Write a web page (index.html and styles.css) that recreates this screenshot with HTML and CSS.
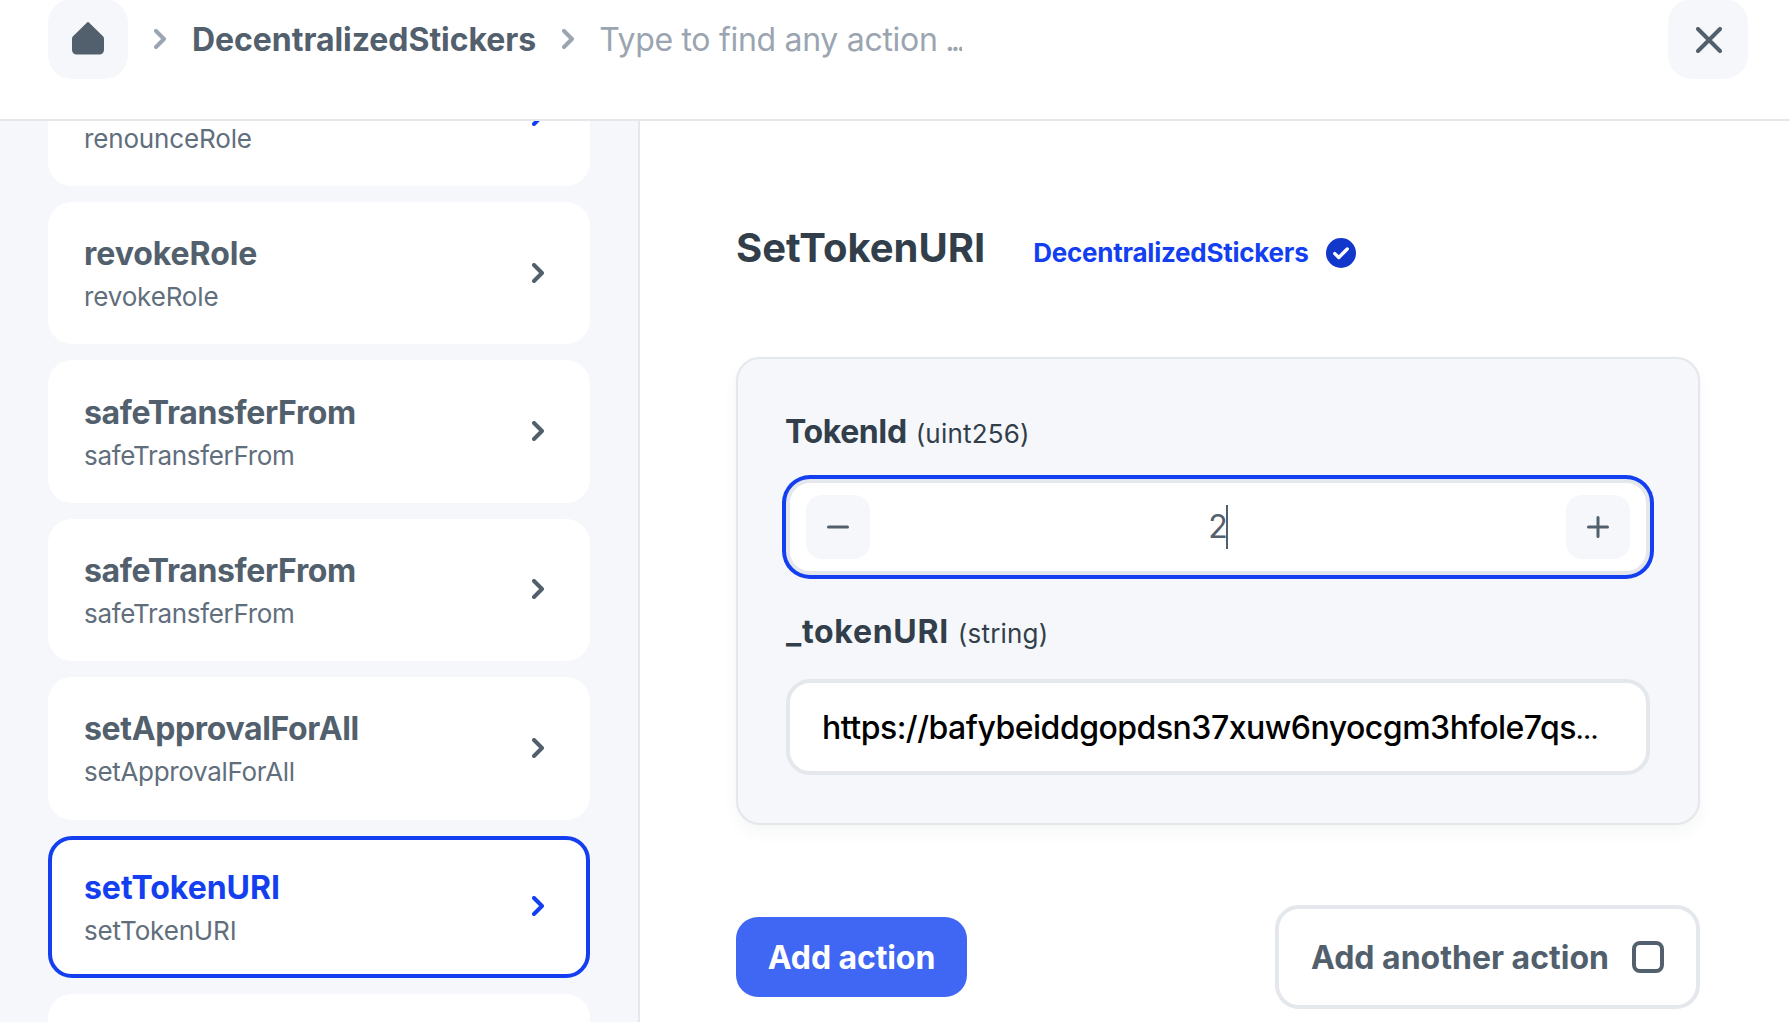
FILE: index.html
```html
<!DOCTYPE html>
<html lang="en">
<head>
<meta charset="utf-8">
<title>SetTokenURI</title>
<link rel="stylesheet" href="styles.css">
</head>
<body>
<svg class="defs" width="0" height="0" aria-hidden="true">
  <symbol id="chevron" viewBox="0 0 12 20"><path d="M2 2l8 8-8 8" fill="none" stroke="currentColor" stroke-width="4" stroke-linecap="round" stroke-linejoin="round"/></symbol>
</svg>
<header class="topbar">
  <button class="square-btn" aria-label="Home">
    <svg width="32" height="33" viewBox="0 0 32 33"><path d="M14.8.7a1.7 1.7 0 0 1 2.4 0L31 14.3a3.400 3.400 0 0 1 1 2.400V28a4.500 4.500 0 0 1-4.500 4.500h-23A4.500 4.500 0 0 1 0 28V16.700a3.400 3.400 0 0 1 1-2.400z" fill="currentColor"/></svg>
  </button>
  <svg class="crumb-chevron" width="12" height="20"><use href="#chevron"/></svg>
  <span class="crumb">DecentralizedStickers</span>
  <svg class="crumb-chevron" width="12" height="20"><use href="#chevron"/></svg>
  <span class="search">Type to find any action <span class="dots">...</span></span>
  <button class="square-btn close" aria-label="Close">
    <svg width="26" height="26" viewBox="0 0 26 26"><path d="M2 2l22 22M24 2L2 24" stroke="currentColor" stroke-width="4" stroke-linecap="round"/></svg>
  </button>
</header>
<div class="body">
  <nav class="sidebar">
    <div class="card active-arrow">
      <div><div class="card-title">renounceRole</div><div class="card-sub">renounceRole</div></div>
      <svg class="card-chevron" width="12" height="20"><use href="#chevron"/></svg>
    </div>
    <div class="card">
      <div><div class="card-title">revokeRole</div><div class="card-sub">revokeRole</div></div>
      <svg class="card-chevron" width="12" height="20"><use href="#chevron"/></svg>
    </div>
    <div class="card tight">
      <div><div class="card-title">safeTransferFrom</div><div class="card-sub">safeTransferFrom</div></div>
      <svg class="card-chevron" width="12" height="20"><use href="#chevron"/></svg>
    </div>
    <div class="card tight">
      <div><div class="card-title">safeTransferFrom</div><div class="card-sub">safeTransferFrom</div></div>
      <svg class="card-chevron" width="12" height="20"><use href="#chevron"/></svg>
    </div>
    <div class="card tight">
      <div><div class="card-title">setApprovalForAll</div><div class="card-sub">setApprovalForAll</div></div>
      <svg class="card-chevron" width="12" height="20"><use href="#chevron"/></svg>
    </div>
    <div class="card selected">
      <div><div class="card-title">setTokenURI</div><div class="card-sub">setTokenURI</div></div>
      <svg class="card-chevron" width="12" height="20"><use href="#chevron"/></svg>
    </div>
    <div class="card"></div>
  </nav>
  <main class="main">
    <div class="heading">
      <h1>SetTokenURI</h1>
      <a class="contract">DecentralizedStickers</a>
      <svg class="verified" width="30" height="30" viewBox="0 0 30 30"><circle cx="15" cy="15" r="15" fill="currentColor"/><path d="M8.800 15.600l4 3.900 8.400-8.500" fill="none" stroke="#fff" stroke-width="3.400" stroke-linecap="round" stroke-linejoin="round"/></svg>
    </div>
    <section class="panel">
      <div class="label"><span class="name token-id">TokenId</span><span class="type">(uint256)</span></div>
      <div class="field number focused">
        <button class="step" aria-label="Decrease"><svg width="22" height="22" viewBox="0 0 22 22"><path d="M1.500 11h19" stroke="currentColor" stroke-width="3" stroke-linecap="round"/></svg></button>
        <span class="value">2</span>
        <button class="step" aria-label="Increase"><svg width="22" height="22" viewBox="0 0 22 22"><path d="M1.500 11h19M11 1.500v19" stroke="currentColor" stroke-width="3" stroke-linecap="round"/></svg></button>
      </div>
      <div class="label second"><span class="name token-uri">_tokenURI</span><span class="type">(string)</span></div>
      <div class="field text"><span>https://bafybeiddgopdsn37xuw6nyocgm3hfole7qs<span class="ellipsis">…</span></span></div>
    </section>
    <div class="actions">
      <button class="primary">Add action</button>
      <button class="secondary">Add another action<span class="checkbox"></span></button>
    </div>
  </main>
</div>
</body>
</html>
```

FILE: styles.css
```css
* { box-sizing: border-box; }

body {
  margin: 0;
  height: 1022px;
  overflow: hidden;
  display: flex;
  flex-direction: column;
  background: #fff;
  color: #52606d;
  font-family: Inter, "Liberation Sans", sans-serif;
  font-size: 32px;
  white-space: nowrap;
}

svg { display: block; flex: none; }
.defs { position: absolute; }

button {
  display: flex;
  align-items: center;
  justify-content: center;
  flex: none;
  margin: 0;
  padding: 0;
  border: 0;
  font: inherit;
  color: inherit;
}

.topbar {
  flex: none;
  height: 121px;
  padding: 0 42px 42px 48px;
  border-bottom: 2px solid #e4e7eb;
  display: flex;
  align-items: center;
}

.square-btn {
  width: 80px;
  height: 80px;
  border-radius: 24px;
  background: #f5f7fb;
}

.close { margin-left: auto; }
.close svg { margin: 3px 0 0 1px; }
.crumb-chevron { margin: 0 26px; color: #9aa5b1; }
.crumb { font-weight: 700; line-height: 40px; margin-top: 2px; letter-spacing: -0.05px; }

.search {
  width: 363px;
  overflow: hidden;
  line-height: 40px;
  margin: 2px 0 0 -1px;
  color: #9aa5b1;
  letter-spacing: -0.3px;
}

.dots { margin-left: -1px; letter-spacing: -3.6px; }

.body { flex: 1; min-height: 0; display: flex; }

.sidebar {
  width: 640px;
  flex: none;
  padding: 0 48px;
  background: #f5f7fb;
  border-right: 2px solid #e4e7eb;
  display: flex;
  flex-direction: column;
  justify-content: flex-start;
  gap: 16px;
  overflow: hidden;
}

.card {
  flex: none;
  height: 142.4px;
  padding: 4px 46px 0 36px;
  border-radius: 24px;
  background: #fff;
  display: flex;
  align-items: center;
  justify-content: space-between;
}

.card:first-child { margin-top: -77.4px; }
.card-title { font-weight: 700; line-height: 40px; letter-spacing: -0.05px; }
.card-sub { margin-top: 4px; font-size: 26px; line-height: 38px; color: #616e7c; letter-spacing: -0.15px; }
.card-chevron { margin-top: -5px; }
.tight .card-title { letter-spacing: -0.35px; }
.tight .card-sub { letter-spacing: -0.32px; }
.active-arrow .card-chevron { color: #143ff0; margin-top: -2px; }
.selected { border: 4px solid #143ff0; padding: 4px 42px 0 32px; }
.selected .card-title, .selected .card-chevron { color: #143ff0; }

.main { flex: 1; min-width: 0; padding: 101px 90px 0 96px; }

.heading { display: flex; align-items: baseline; height: 52px; color: #323f4b; }
h1 { margin: 0; font-size: 40px; font-weight: 700; line-height: 52px; }
.contract { margin-left: 48px; font-size: 26px; font-weight: 700; letter-spacing: -0.25px; color: #143ff0; }
.verified { align-self: flex-start; margin: 16px 0 0 18px; color: #1237cb; }

.panel {
  margin-top: 83px;
  height: 468px;
  padding: 50px 48px 0;
  border: 2px solid #e4e7eb;
  border-radius: 24px;
  background: #f5f7fb;
  box-shadow: 0 8px 16px rgba(31, 60, 41, .04), 0 0 2px rgba(31, 60, 41, .04);
  color: #323f4b;
}

.label { display: flex; align-items: baseline; gap: 9px; height: 44px; line-height: 45px; }
.label.second { margin-top: 34px; }
.name { font-weight: 700; }
.token-id { margin-left: -1px; letter-spacing: -0.4px; }
.token-uri { letter-spacing: 0.7px; }
.type { font-size: 26px; letter-spacing: 0.2px; }

.field {
  margin-top: 26px;
  height: 96px;
  border: 4px solid #e4e7eb;
  border-radius: 24px;
  background: #fff;
  display: flex;
  align-items: center;
}

.number { padding: 0 16px; justify-content: space-between; color: #52606d; }
.focused { box-shadow: 0 0 0 4px #143ff0; }
.step { width: 64px; height: 64px; border-radius: 16px; background: #f5f7fb; }
.value { line-height: 44px; letter-spacing: -2px; border-right: 2px solid #52606d; }
.text { padding-left: 32px; color: #000; font-weight: 500; letter-spacing: -0.5px; }
.ellipsis { font-size: 21px; font-weight: 800; }

.actions { margin-top: 80px; display: flex; align-items: center; justify-content: space-between; font-weight: 700; }
.primary { width: 231px; height: 80px; border-radius: 22px; background: #4067f3; color: #fff; letter-spacing: -0.1px; }

.secondary {
  width: 425px;
  height: 104px;
  padding: 0 32px;
  border: 4px solid #e4e7eb;
  border-radius: 24px;
  background: #fff;
  justify-content: space-between;
}

.checkbox { width: 32px; height: 32px; border: 4px solid #52606d; border-radius: 8px; }
```
